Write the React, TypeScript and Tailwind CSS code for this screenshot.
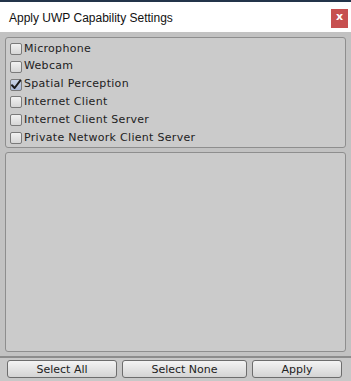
const CAPS = [
  { label: "Microphone", on: false },
  { label: "Webcam", on: false },
  { label: "Spatial Perception", on: true },
  { label: "Internet Client", on: false },
  { label: "Internet Client Server", on: false },
  { label: "Private Network Client Server", on: false },
];

function Check({ on }: { on: boolean }) {
  return (
    <span
      className={
        "relative inline-block h-[12px] w-[12px] shrink-0 rounded-[2px] border border-[#7a7a7a] " +
        (on
          ? "bg-gradient-to-b from-[#c9d3e6] to-[#aab8d6]"
          : "bg-gradient-to-b from-[#f2f2f2] to-[#d6d6d6]")
      }
    >
      {on && (
        <svg viewBox="0 0 12 12" className="absolute -left-px -top-px h-[12px] w-[12px]">
          <path d="M2 6.2 L4.6 9 L10.2 1.6" fill="none" stroke="#1a1a1a" strokeWidth="2" strokeLinecap="round" strokeLinejoin="round" />
        </svg>
      )}
    </span>
  );
}

function Btn({ children, w }: { children: string; w: string }) {
  return (
    <button
      className={
        w +
        " h-[18px] rounded-[3px] border border-[#6d6d6d] bg-gradient-to-b from-[#f4f4f4] to-[#d4d4d4] text-[11px] leading-none text-[#222]"
      }
      style={{ fontFamily: "'DejaVu Sans', Verdana, sans-serif" }}
    >
      {children}
    </button>
  );
}

export default function App() {
  return (
    <div className="flex h-[381px] w-[351px] flex-col overflow-hidden bg-[#c2c2c2]">
      {/* barra de título */}
      <div className="h-[2px] bg-[#23344a]" />
      <div className="flex h-[30px] items-start justify-between bg-white">
        <span
          className="pl-[9px] pt-[7px] text-[12px] text-[#111]"
          style={{ fontFamily: "'Liberation Sans', Arial, sans-serif" }}
        >
          Apply UWP Capability Settings
        </span>
        <span className="mr-[3px] mt-[7px] flex h-[19px] w-[17px] items-center justify-center bg-[#c75050] pb-[2px] text-[11px] font-bold text-white" style={{ fontFamily: "'DejaVu Sans', sans-serif" }}>
          x
        </span>
      </div>

      <div
        className="flex flex-1 flex-col px-[5px] pt-[5px] text-[11px] text-[#222]"
        style={{ fontFamily: "'DejaVu Sans', Verdana, sans-serif" }}
      >
        <div className="flex h-[111px] flex-col rounded-[3px] border border-[#8e8e8e] bg-[#cbcbcb] pl-[4px] pt-[2px]">
          {CAPS.map((c) => (
            <label key={c.label} className="flex h-[18px] items-center gap-[2px] tracking-[0.3px]">
              <Check on={c.on} />
              <span>{c.label}</span>
            </label>
          ))}
        </div>
        <div className="mt-[4px] h-[200px] rounded-[3px] border border-[#8e8e8e] bg-[#cbcbcb]" />
      </div>

      <div className="mt-[4px] flex h-[25px] items-start gap-[5px] border-t-2 border-[#8c8c8c] bg-[#c8c8c8] px-[7px] pt-[2px]">
        <Btn w="w-[110px]">Select All</Btn>
        <Btn w="w-[125px]">Select None</Btn>
        <Btn w="w-[90px]">Apply</Btn>
      </div>
    </div>
  );
}
